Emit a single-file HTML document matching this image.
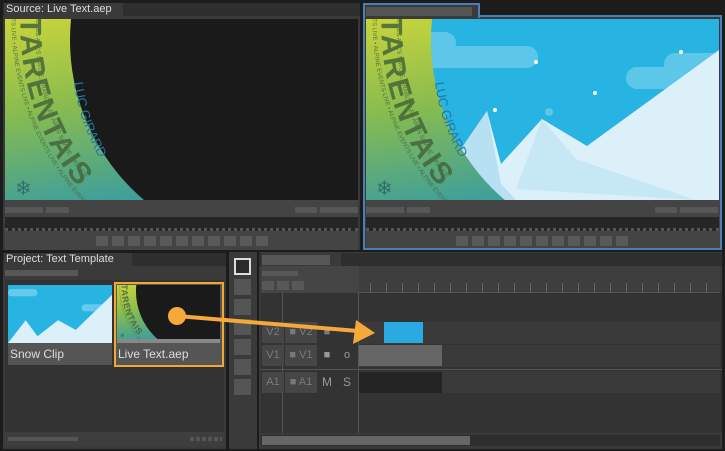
<!DOCTYPE html>
<html><head><meta charset="utf-8"><style>
*{margin:0;padding:0;box-sizing:border-box}
body{width:725px;height:451px;background:#1c1c1c;position:relative;overflow:hidden;font-family:"Liberation Sans",sans-serif}
.a{position:absolute}
.p{background:#3a3a3a}
.b{background:#575757}
.t{color:#ddd;font-size:11px;line-height:13px;white-space:nowrap}
.tl{color:#7a7a7a;font-size:11px;line-height:21px;text-align:center}
</style></head><body>
<svg width="0" height="0" class="a"><defs>
<linearGradient id="g" x1="0" y1="0" x2="0.3" y2="1"><stop offset="0" stop-color="#c9d43c"/><stop offset=".5" stop-color="#86bb50"/><stop offset="1" stop-color="#3f9f9a"/></linearGradient>
<path id="r1" d="M10,-40 A265,265 0 0 0 95,200"/>
<path id="r2" d="M20,-40 A252,252 0 0 0 105,200"/>
<path id="r3" d="M38,-40 A232,232 0 0 0 120,200"/>
<path id="r4" d="M80,-30 A198,198 0 0 0 150,200"/>
<clipPath id="c"><circle cx="275" cy="21" r="210"/></clipPath>
<g id="ring">
<rect width="353" height="181" fill="url(#g)"/>
<g fill="#46663a" font-family="Liberation Sans,sans-serif" opacity=".85">
<text font-size="6"><textPath href="#r1">ALPINE EVENTS LIVE • ALPINE EVENTS LIVE • ALPINE EVENTS LIVE • ALPINE EVENTS</textPath></text>
<text font-size="30" font-weight="bold" letter-spacing="2"><textPath href="#r2" startOffset="38">TARENTAIS</textPath></text>
<text font-size="6"><textPath href="#r3" startOffset="20">FRANCE-LES ARCS SAVOIE, FRANCE-LES ARCS SAVOIE, FRANCE</textPath></text>
</g>
<text x="10" y="176" font-size="20" fill="#2f6f6a">❄</text>
</g>
</defs></svg>

<!-- Source panel -->
<div class="a p" style="left:3px;top:15px;width:357px;height:235px"></div>
<div class="a" style="left:3px;top:3px;width:357px;height:13px;background:#2e2e2e"></div>
<div class="a p t" style="left:4px;top:3px;width:119px;height:14px;padding-left:2px">Source: Live Text.aep</div>
<svg class="a" style="left:5px;top:19px" width="353" height="181"><use href="#ring"/><circle cx="275" cy="21" r="210" fill="#1a1a1a"/>
<text font-size="13" fill="#1f78a8" font-family="Liberation Sans,sans-serif"><textPath href="#r4" startOffset="95">LUC GIRARD</textPath></text></svg>
<div class="a" style="left:5px;top:200px;width:353px;height:50px;background:#444"></div>
<div class="a b" style="left:5px;top:207px;width:38px;height:6px"></div><div class="a b" style="left:46px;top:207px;width:23px;height:6px"></div>
<div class="a b" style="left:295px;top:207px;width:22px;height:6px"></div><div class="a b" style="left:320px;top:207px;width:38px;height:6px"></div>
<div class="a" style="left:5px;top:217px;width:353px;height:14px;background:#262626;border-bottom:3px dotted #555"></div>
<div class="a" style="left:96px;top:236px;width:172px;height:10px;background:repeating-linear-gradient(90deg,#5a5a5a 0 12px,transparent 12px 16px)"></div>

<!-- Program panel -->
<div class="a p" style="left:363px;top:15px;width:359px;height:235px;border:2px solid #4a7fb4"></div>
<div class="a" style="left:363px;top:3px;width:117px;height:15px;border:2px solid #4a7fb4;border-bottom:none;background:#3a3a3a"></div>
<div class="a b" style="left:366px;top:7px;width:106px;height:9px;background:#555"></div>
<svg class="a" style="left:366px;top:19px" width="353" height="181"><use href="#ring"/>
<g clip-path="url(#c)"><rect width="353" height="181" fill="#27b4e2"/>
<g fill="#fff" opacity=".25"><rect x="-10" y="13" width="100" height="22" rx="11"/><rect x="30" y="27" width="142" height="22" rx="11"/><rect x="260" y="48" width="90" height="22" rx="11"/><rect x="298" y="34" width="60" height="22" rx="11"/><circle cx="269" cy="52" r="4"/><circle cx="183" cy="93" r="4"/><circle cx="253" cy="117" r="4"/></g>
<g fill="#fff"><circle cx="170" cy="43" r="2"/><circle cx="315" cy="33" r="2"/><circle cx="229" cy="74" r="2"/><circle cx="129" cy="91" r="2"/></g>
<polygon points="60,181 121,92 135,145 176,100 221,127 353,31 353,181" fill="#dcf0f9"/>
<polygon points="60,181 121,92 135,165 150,181" fill="#b7e0f2"/>
<polygon points="176,100 150,170 330,181 210,140" fill="#c6e8f5"/>
</g>
<text font-size="13" fill="#1f78a8" font-family="Liberation Sans,sans-serif"><textPath href="#r4" startOffset="95">LUC GIRARD</textPath></text></svg>
<div class="a" style="left:366px;top:200px;width:354px;height:48px;background:#444"></div>
<div class="a b" style="left:366px;top:207px;width:38px;height:6px"></div><div class="a b" style="left:407px;top:207px;width:23px;height:6px"></div>
<div class="a b" style="left:655px;top:207px;width:22px;height:6px"></div><div class="a b" style="left:680px;top:207px;width:38px;height:6px"></div>
<div class="a" style="left:366px;top:217px;width:353px;height:14px;background:#262626;border-bottom:3px dotted #555"></div>
<div class="a" style="left:456px;top:236px;width:172px;height:10px;background:repeating-linear-gradient(90deg,#5a5a5a 0 12px,transparent 12px 16px)"></div>

<!-- Project panel -->
<div class="a p" style="left:3px;top:265px;width:223px;height:184px"></div>
<div class="a" style="left:3px;top:253px;width:223px;height:13px;background:#2e2e2e"></div>
<div class="a p t" style="left:4px;top:253px;width:128px;height:14px;padding-left:2px">Project: Text Template</div>
<div class="a b" style="left:5px;top:270px;width:73px;height:6px"></div>
<div class="a" style="left:5px;top:280px;width:219px;height:152px;background:#333"></div>
<svg class="a" style="left:8px;top:285px" width="104" height="58" viewBox="0 0 353 181" preserveAspectRatio="none"><rect width="353" height="181" fill="#27b4e2"/><g fill="#fff" opacity=".3"><rect x="0" y="13" width="100" height="22" rx="11"/><rect x="250" y="60" width="90" height="22" rx="11"/></g><polygon points="0,181 60,110 100,160 170,110 230,140 353,31 353,181" fill="#dcf0f9"/></svg>
<div class="a t" style="left:8px;top:343px;width:104px;height:22px;background:#555;padding:3px 2px;font-size:12px;line-height:16px">Snow Clip</div>
<div class="a" style="left:114px;top:282px;width:110px;height:85px;border:2px solid #f0a830;background:#555"></div>
<svg class="a" style="left:117px;top:285px" width="103" height="54" viewBox="0 0 353 181" preserveAspectRatio="none"><use href="#ring"/><circle cx="275" cy="21" r="210" fill="#1a1a1a"/></svg>
<div class="a" style="left:117px;top:339px;width:103px;height:4px;background:#888"></div>
<div class="a t" style="left:117px;top:344px;width:103px;height:20px;padding:2px 1px;font-size:12px;line-height:16px">Live Text.aep</div>
<div class="a" style="left:5px;top:432px;width:219px;height:14px;background:#3e3e3e"></div>
<div class="a" style="left:8px;top:437px;width:70px;height:4px;background:#555"></div>
<div class="a" style="left:190px;top:437px;width:32px;height:4px;background:repeating-linear-gradient(90deg,#555 0 4px,transparent 4px 6px)"></div>

<!-- Tools -->
<div class="a p" style="left:229px;top:252px;width:28px;height:197px"></div>
<div class="a" style="left:234px;top:258px;width:17px;height:17px;border:2px solid #ddd;background:#2a2a2a"></div>
<div class="a" style="left:234px;top:279px;width:17px;height:120px;background:repeating-linear-gradient(180deg,#555 0 16px,transparent 16px 20px)"></div>

<!-- Timeline -->
<div class="a p" style="left:259px;top:252px;width:463px;height:197px"></div>
<div class="a" style="left:259px;top:253px;width:463px;height:13px;background:#2e2e2e"></div>
<div class="a p" style="left:261px;top:253px;width:80px;height:14px"></div>
<div class="a b" style="left:262px;top:255px;width:68px;height:10px"></div>
<div class="a" style="left:261px;top:266px;width:98px;height:27px;background:#454545"></div>
<div class="a b" style="left:262px;top:271px;width:36px;height:5px"></div>
<div class="a" style="left:262px;top:281px;width:45px;height:9px;background:repeating-linear-gradient(90deg,#585858 0 12px,transparent 12px 15px)"></div>
<div class="a" style="left:359px;top:266px;width:361px;height:27px;background:#3e3e3e;border-bottom:1px solid #555"></div>
<div class="a" style="left:370px;top:283px;width:345px;height:9px;background:repeating-linear-gradient(90deg,#666 0 1px,transparent 1px 16px)"></div>
<div class="a" style="left:261px;top:293px;width:461px;height:140px;background:#333"></div>
<div class="a" style="left:282px;top:293px;width:1px;height:140px;background:#555"></div>
<div class="a" style="left:358px;top:293px;width:1px;height:140px;background:#555"></div>
<div class="a" style="left:359px;top:322px;width:361px;height:22px;background:#3a3a3a"></div>
<div class="a" style="left:359px;top:345px;width:361px;height:22px;background:#3a3a3a"></div>
<div class="a" style="left:261px;top:369px;width:461px;height:1px;background:#555"></div>
<div class="a" style="left:359px;top:371px;width:361px;height:22px;background:#3a3a3a"></div>
<div class="a tl" style="left:262px;top:322px;width:22px;height:21px;background:#464646">V2</div>
<div class="a tl" style="left:285px;top:322px;width:32px;height:21px;background:#464646">■ V2</div>
<div class="a tl" style="left:318px;top:322px;width:18px;height:21px">■</div>
<div class="a tl" style="left:262px;top:345px;width:22px;height:21px;background:#464646">V1</div>
<div class="a tl" style="left:285px;top:345px;width:32px;height:21px;background:#464646">■ V1</div>
<div class="a tl" style="left:318px;top:345px;width:18px;height:21px;color:#999">■</div>
<div class="a tl" style="left:338px;top:345px;width:18px;height:21px;color:#999">o</div>
<div class="a tl" style="left:262px;top:372px;width:22px;height:21px;background:#464646">A1</div>
<div class="a tl" style="left:285px;top:372px;width:32px;height:21px;background:#464646">■ A1</div>
<div class="a tl" style="left:318px;top:372px;width:18px;height:21px;color:#999;font-size:12px">M</div>
<div class="a tl" style="left:338px;top:372px;width:18px;height:21px;color:#999;font-size:12px">S</div>
<div class="a" style="left:384px;top:322px;width:39px;height:21px;background:#29abe2"></div>
<div class="a" style="left:359px;top:345px;width:83px;height:21px;background:#666"></div>
<div class="a" style="left:359px;top:372px;width:83px;height:21px;background:#242424"></div>
<div class="a" style="left:261px;top:435px;width:459px;height:11px;background:#2e2e2e"></div>
<div class="a" style="left:262px;top:436px;width:208px;height:9px;background:#666"></div>

<!-- drag arrow -->
<svg class="a" style="left:0;top:0" width="725" height="451">
<line x1="177" y1="316" x2="358" y2="331" stroke="#f5a93a" stroke-width="4"/>
<polygon points="375,333 353,344 356,320" fill="#f5a93a"/>
<circle cx="177" cy="316" r="9" fill="#f5a93a"/>
</svg>
</body></html>
